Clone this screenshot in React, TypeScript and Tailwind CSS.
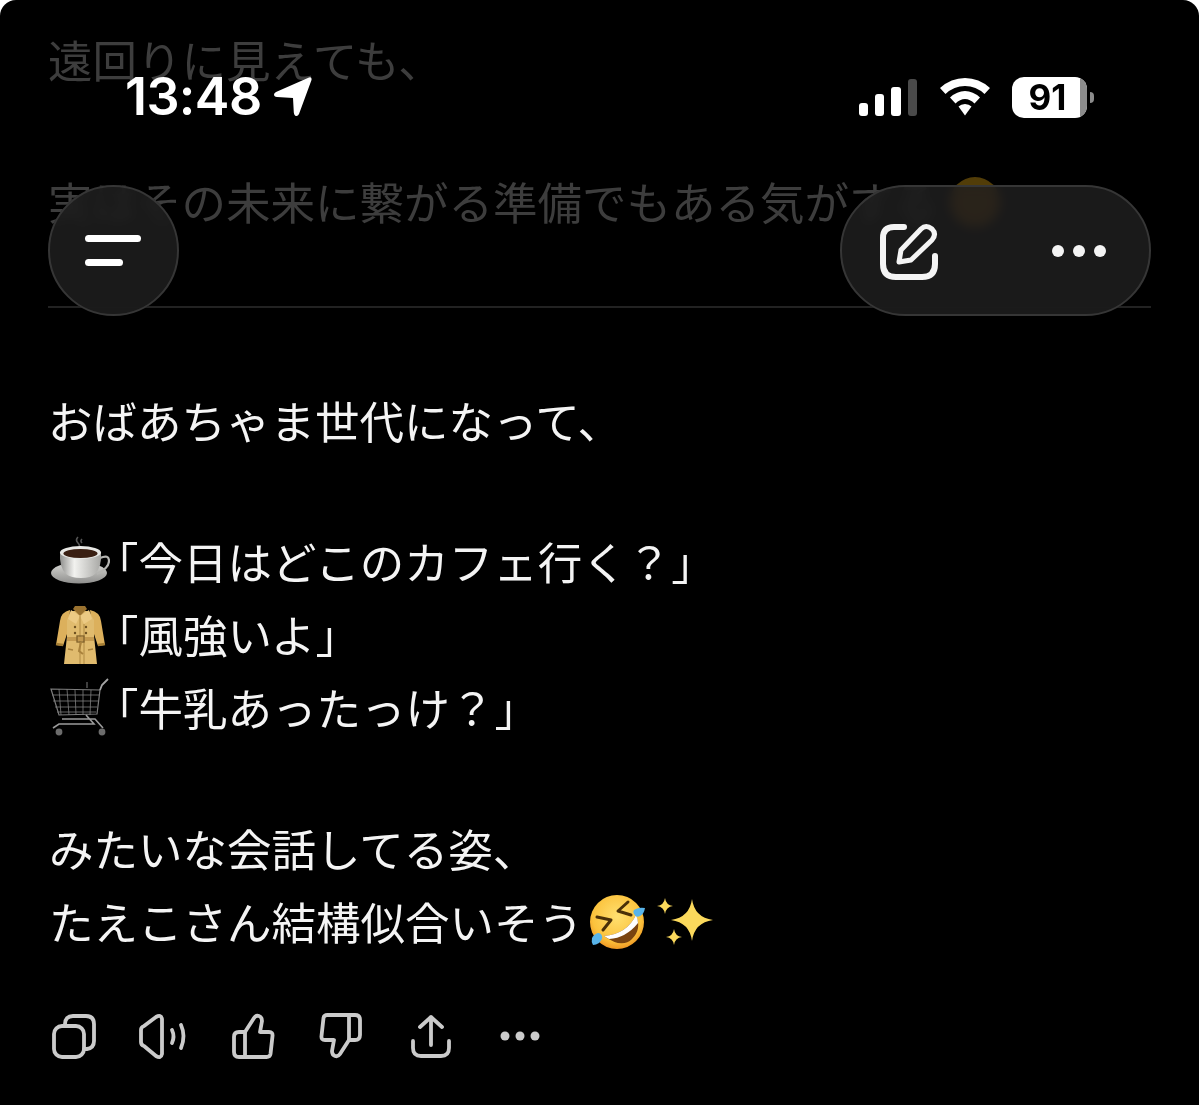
import React from 'react';

const jp = "font-['Noto_Sans_CJK_JP','Noto_Sans_CJK_SC',sans-serif]";

const CoffeeEmoji = () => (
  <svg viewBox="0 0 60 60" className="w-[60px] h-[60px] shrink-0 ml-[2px] -mr-4">
    <defs>
      <linearGradient id="cup" x1="0" y1="0" x2="1" y2="0">
        <stop offset="0" stopColor="#8e8e8c" />
        <stop offset="0.35" stopColor="#f2f2ef" />
        <stop offset="1" stopColor="#a8a8a5" />
      </linearGradient>
      <linearGradient id="saucer" x1="0" y1="0" x2="0" y2="1">
        <stop offset="0" stopColor="#d8d8d5" />
        <stop offset="1" stopColor="#8f8f8d" />
      </linearGradient>
    </defs>
    <g transform="translate(0 4)">
      <path d="M28 1q-3 3 0 6t0 7M32 3q-2 2 0 4" stroke="#555" strokeWidth="1.6" fill="none" />
      <ellipse cx="29" cy="37" rx="28" ry="10.5" fill="url(#saucer)" />
      <path d="M50 22q9-4 9 3t-12 13" stroke="#b5b5b2" strokeWidth="2.2" fill="none" />
      <path d="M10 16h41q1 15-6 22q-4 4-14 4t-15-4q-7-7-6-22z" fill="url(#cup)" />
      <ellipse cx="30.5" cy="16.5" rx="20.5" ry="6.5" fill="#e8e8e5" />
      <ellipse cx="30.5" cy="17.500" rx="17" ry="4.5" fill="#3a1f12" />
    </g>
  </svg>
);

const CoatEmoji = () => (
  <svg viewBox="0 0 60 60" className="w-[60px] h-[60px] shrink-0 ml-[2px] -mr-4">
    <path d="M20 5Q11 7 10 16L6 40l7 1 6-18zM40 5q10 2 11 11l4 24-7 1-6-18z" fill="#dcb05c" />
    <path d="M6 39l7 1M48 40l7-1" stroke="#a57e35" strokeWidth="2.5" />
    <path d="M21 6h18l5 9v16l3 28H14l3-28V15z" fill="#e0bb6e" />
    <path d="M23 4l7 7 7-7-2-3H25z" fill="#9a7230" />
    <path d="M21 5l-3 9 8 5 4-8zM39 5l3 9-8 5-4-8z" fill="#ecca84" />
    <path d="M30 11v48M34 19v40" stroke="#b08a42" strokeWidth="1" />
    <rect x="17" y="32" width="27" height="4" fill="#c49a50" />
    <rect x="27" y="31" width="7" height="6" fill="none" stroke="#80602a" strokeWidth="1.3" />
    <path d="M31 37l-2 9 4 3" stroke="#a9823c" strokeWidth="2" fill="none" />
    <circle cx="25" cy="22" r="1.2" fill="#6d5020" /><circle cx="36" cy="22" r="1.2" fill="#6d5020" />
    <circle cx="25" cy="28" r="1.2" fill="#6d5020" /><circle cx="36" cy="28" r="1.2" fill="#6d5020" />
    <path d="M18 44l5 1M38 45l5-1" stroke="#a9823c" strokeWidth="1.5" />
  </svg>
);

const CartEmoji = () => (
  <svg viewBox="0 0 60 60" className="w-[60px] h-[60px] shrink-0 ml-[2px] -mr-4">
    <g stroke="#7d7d7d" fill="none">
      <path d="M1 11l49 1-3 24-38 1z" strokeWidth="1.2" />
      <path d="M2 17l47 0M3 23l45 0M5 29l42 0M7 34l39 0" strokeWidth="0.8" />
      <path d="M9 11l2 26M17 11l2 26M25 12l1 25M33 12l0 25M41 12l-1 25" strokeWidth="0.8" />
      <path d="M50 12l2-5 6-6" strokeWidth="1.8" stroke="#a5a5a5" />
      <path d="M36 37l8 9H9l-6 4M12 41h33l8 9" strokeWidth="1.6" stroke="#9a9a9a" />
      <path d="M37 4v6" strokeWidth="1" />
    </g>
    <circle cx="9" cy="54" r="3.4" fill="#6c6c6c" />
    <circle cx="52" cy="54" r="3.4" fill="#6c6c6c" />
  </svg>
);

const RoflEmoji = () => (
  <svg viewBox="0 0 56 56" className="w-[56px] h-[56px] shrink-0 ml-[6px]">
    <defs>
      <radialGradient id="face" cx="0.5" cy="0.4" r="0.65">
        <stop offset="0" stopColor="#ffe070" />
        <stop offset="0.7" stopColor="#fbc23c" />
        <stop offset="1" stopColor="#ec8a1c" />
      </radialGradient>
    </defs>
    <circle cx="28" cy="28" r="27" fill="url(#face)" />
    <path d="M39 8L29 17l13 4" stroke="#4a3008" strokeWidth="3" fill="none" strokeLinecap="round" strokeLinejoin="round" />
    <path d="M8 23l14 3-8 10" stroke="#4a3008" strokeWidth="3" fill="none" strokeLinecap="round" strokeLinejoin="round" />
    <path d="M15 42Q38 40 47 21q6 14-4 24T15 42z" fill="#7a4410" />
    <path d="M15 42Q38 40 47 21q2 4 2 8-12 15-29 16z" fill="#fff" />
    <path d="M47 15q4-2 9-1-1 6-5 8t-6-2 2-5z" fill="#58b4ea" />
    <path d="M3 44q2-4 6-5 3 0 4 3t-3 7q-3 2-6 2-2-3-1-7z" fill="#58b4ea" />
  </svg>
);

const Star = ({ x, y, r }: { x: number; y: number; r: number }) => (
  <path
    d={`M${x} ${y - r}Q${x + r * 0.12} ${y - r * 0.12} ${x + r} ${y}Q${x + r * 0.12} ${y + r * 0.12} ${x} ${y + r}Q${x - r * 0.12} ${y + r * 0.12} ${x - r} ${y}Q${x - r * 0.12} ${y - r * 0.12} ${x} ${y - r}z`}
    fill="#fbd95c"
  />
);

const SparkleEmoji = () => (
  <svg viewBox="0 0 56 56" className="w-[56px] h-[56px] shrink-0 ml-[12px]">
    <Star x={35} y={26} r={21} />
    <Star x={8} y={12} r={8} />
    <Star x={17} y={43} r={8} />
  </svg>
);

const TextLine = ({ children }: { children: React.ReactNode }) => (
  <div className="flex items-center h-[73px] whitespace-nowrap">{children}</div>
);

const ActionIcon = ({ children }: { children: React.ReactNode }) => (
  <svg viewBox="0 0 48 48" className="w-[48px] h-[48px] shrink-0 overflow-visible" fill="none" stroke="#cbcbcb" strokeWidth="3.8" strokeLinecap="round" strokeLinejoin="round">
    {children}
  </svg>
);

const ActionRow = () => (
  <div className="flex gap-[41.2px] mt-[54px] ml-[2px]">
    <ActionIcon>
      <rect x="4" y="14" width="30" height="31" rx="8" />
      <path d="M15 14v-2q0-8 8-8h13q8 0 8 8v17q0 7-7 8h-3" />
    </ActionIcon>
    <ActionIcon>
      <path d="M2 18q0-3 3-4L17 5q5-3 6 2v35q-1 5-6 2L5 34q-3-1-3-4z" />
      <path d="M33 18q3 6.500 0 13M42 13q5 11 0 23" />
    </ActionIcon>
    <ActionIcon>
      <path d="M17 20l9-14q2-3 5-2 3 1 3 5l-2 11h9q4 0 3.500 4l-2 18q-.5 3-4 3H17z" />
      <path d="M17 20h-6q-5 0-5 5v15q0 5 5 5h6" />
    </ActionIcon>
    <ActionIcon>
      <g transform="rotate(180 24 24)">
        <path d="M17 20l9-14q2-3 5-2 3 1 3 5l-2 11h9q4 0 3.500 4l-2 18q-.5 3-4 3H17z" />
        <path d="M17 20h-6q-5 0-5 5v15q0 5 5 5h6" />
      </g>
    </ActionIcon>
    <ActionIcon>
      <path d="M24 33V5M13 15L24 5l11 10" />
      <path d="M6 29v7q0 8 8 8h20q8 0 8-8v-7" />
    </ActionIcon>
    <svg viewBox="0 0 48 48" className="w-[48px] h-[48px] shrink-0" fill="#cbcbcb">
      <circle cx="9" cy="24" r="4.500" />
      <circle cx="24" cy="24" r="4.500" />
      <circle cx="39" cy="24" r="4.500" />
    </svg>
  </div>
);

const StatusBar = () => (
  <div className="absolute top-[76px] left-[125px] right-[105px] h-[42px] flex items-center justify-between text-white">
    <div className="flex items-center gap-[12px]">
      <span className="font-['Inter',sans-serif] font-semibold text-[52px] leading-[42px] tracking-[-0.6px]">13:48</span>
      <svg viewBox="0 0 38 40" className="w-[38px] h-[40px]" fill="#fff">
        <path d="M35 0.500q3-1 2.500 2.500L25 37q-1.500 3-4 1.500-1-.8-1.200-3L19 21 3 20Q0 19.500 0 17.500q0-1.500 2-2.500z" />
      </svg>
    </div>
    <div className="flex items-center">
      <div className="flex items-end gap-[7px] h-[38px] -mt-[1px]">
        <div className="w-[9px] h-[13px] rounded-[3px] bg-white" />
        <div className="w-[9px] h-[22px] rounded-[3px] bg-white" />
        <div className="w-[10px] h-[29px] rounded-[3px] bg-white" />
        <div className="w-[9px] h-[37px] rounded-[3px] bg-[#4a4a4a]" />
      </div>
      <svg viewBox="0 0 50 38" className="w-[50px] h-[38px] ml-[23px]" fill="#fff">
        <path d="M25 0q14 0 25 10l-5.500 6Q36 8 25 8T5.500 16L0 10Q11 0 25 0z" />
        <path d="M25 13q8 0 15 6.500l-5.500 6Q30 21 25 21t-9.500 4.500l-5.500-6Q17 13 25 13z" />
        <path d="M25 26q4 0 6.500 2.500L25 37.500l-6.500-9Q21 26 25 26z" />
      </svg>
      <div className="relative ml-[22px] w-[75px] h-[41px] rounded-[12px] bg-white overflow-hidden flex items-center justify-center pr-[4px]">
        <span className="font-['Inter',sans-serif] font-bold text-[35px] leading-none text-black">91</span>
        <div className="absolute right-0 top-0 bottom-0 w-[7px] bg-[#8c8c8c]" />
      </div>
      <div className="w-[4px] h-[11px] ml-[3px] rounded-r-full bg-[#8c8c8c]" />
    </div>
  </div>
);

export default function App() {
  return (
    <div className={`relative h-[1105px] overflow-hidden rounded-t-[16px] bg-black ${jp}`}>
      <div className="px-[48px] pt-[23px] text-[44.5px] font-normal">
        <div className="text-[#3d3d3d]">
          <TextLine>遠回りに見えても、</TextLine>
          <div className="mt-[69px]">
            <TextLine>
              実はその未来に繋がる準備でもある気がする
              <span className="ml-[12px] w-[50px] h-[50px] rounded-full bg-[#523d08] shrink-0" />
            </TextLine>
          </div>
        </div>
        <div className="mt-[68px] h-[2px] bg-[#222222]" />
        <div className="mt-[76px] text-[#f4f4f4]">
          <TextLine>おばあちゃま世代になって、</TextLine>
          <div className="mt-[68px]">
            <TextLine><CoffeeEmoji />「今日はどこのカフェ行く？」</TextLine>
            <TextLine><CoatEmoji />「風強いよ」</TextLine>
            <TextLine><CartEmoji />「牛乳あったっけ？」</TextLine>
          </div>
          <div className="mt-[68px]">
            <TextLine><span className="ml-[1px]">みたいな会話してる姿、</span></TextLine>
            <TextLine><span className="ml-[1px]">たえこさん結構似合いそう</span><RoflEmoji /><SparkleEmoji /></TextLine>
          </div>
          <ActionRow />
        </div>
      </div>

      <StatusBar />

      <div className="absolute left-[48px] top-[185px] w-[131px] h-[131px] rounded-full bg-[#1e1e1e]/85 backdrop-blur-[6px] backdrop-saturate-200 border-2 border-[#363636] flex flex-col justify-center gap-[17px] pl-[35px]">
        <div className="w-[56px] h-[7px] rounded-full bg-white" />
        <div className="w-[38px] h-[7px] rounded-full bg-white" />
      </div>

      <div className="absolute left-[840px] top-[185px] w-[311px] h-[131px] rounded-full bg-[#1e1e1e]/85 backdrop-blur-[6px] backdrop-saturate-200 border-2 border-[#363636] flex items-center justify-between pl-[37px] pr-[43px]">
        <svg viewBox="0 0 60 60" className="w-[60px] h-[60px]" fill="none" stroke="#f4f4f4" strokeLinecap="round" strokeLinejoin="round">
          <path d="M25 6H15Q4 6 4 17v26q0 13 13 13h26q13 0 13-13v-8" strokeWidth="6" />
          <path d="M20 41l2-12L42 8q5-5 11 0 5 5 0 11L32 39z" strokeWidth="5" />
        </svg>
        <div className="flex gap-[9px]">
          <div className="w-[12px] h-[12px] rounded-full bg-[#f4f4f4]" />
          <div className="w-[12px] h-[12px] rounded-full bg-[#f4f4f4]" />
          <div className="w-[12px] h-[12px] rounded-full bg-[#f4f4f4]" />
        </div>
      </div>
    </div>
  );
}
